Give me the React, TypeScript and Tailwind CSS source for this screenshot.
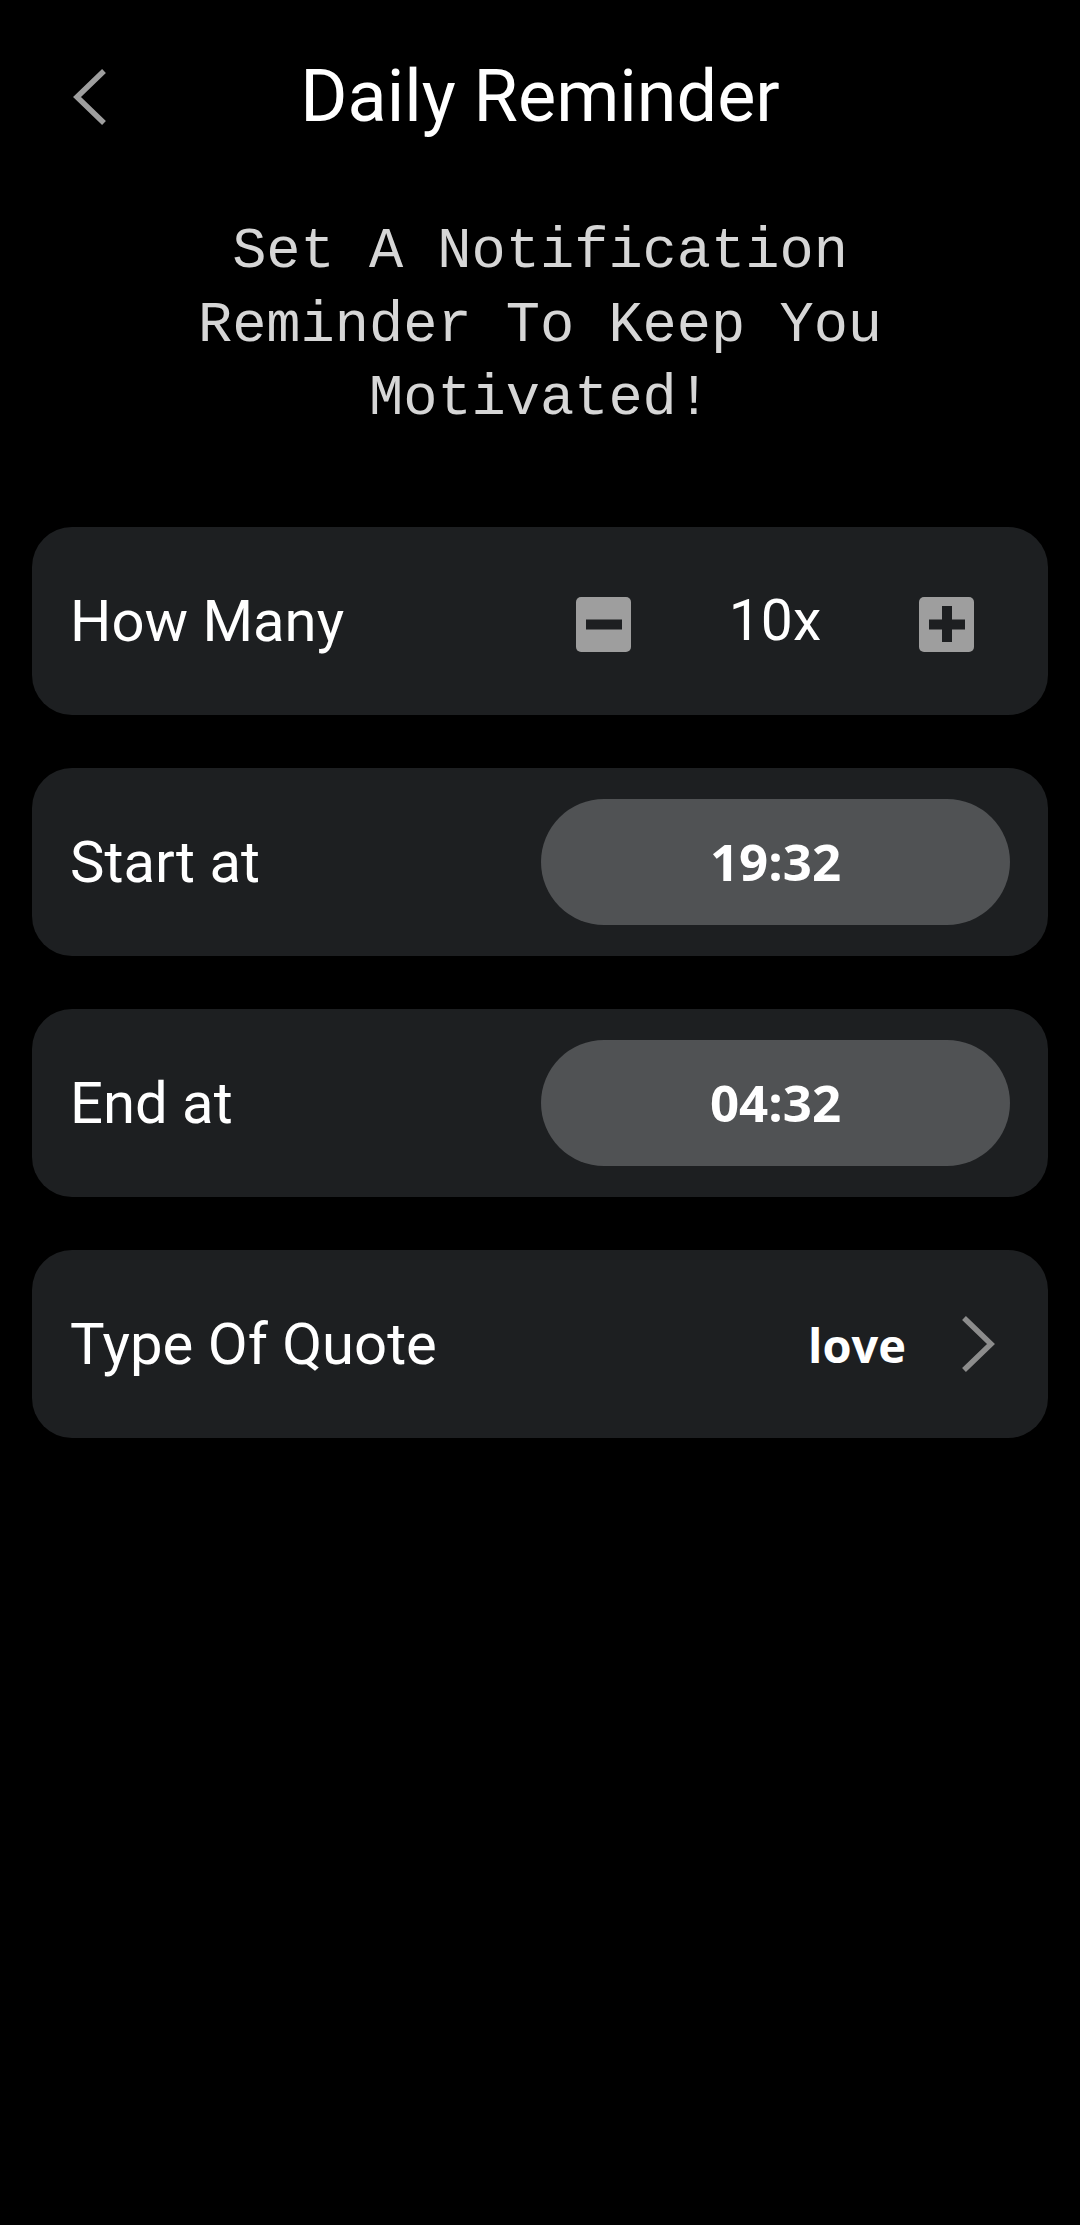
import { useState } from 'react';

function SquareButton({ kind, onClick }: { kind: 'minus' | 'plus'; onClick: () => void }) {
  return (
    <button onClick={onClick} className="mt-[7px] h-[55px] w-[55px] shrink-0">
      <svg viewBox="0 0 55 55" width="55" height="55">
        <rect x="0" y="0" width="55" height="55" rx="5" fill="#9e9e9e" />
        <rect x="10" y="22.5" width="36" height="10" fill="#1d1f21" />
        {kind === 'plus' && <rect x="23" y="9" width="10" height="36" fill="#1d1f21" />}
      </svg>
    </button>
  );
}

function Card({ children }: { children: React.ReactNode }) {
  return (
    <div className="flex h-[188px] items-center justify-between rounded-[40px] bg-[#1d1f21] pl-[38px]">
      {children}
    </div>
  );
}

function Label({ text }: { text: string }) {
  return <span className="text-[58px] leading-none text-white">{text}</span>;
}

function TimePill({ value }: { value: string }) {
  return (
    <div className="mr-[38px] flex h-[126px] w-[469px] items-center justify-center rounded-full bg-[#505254]">
      <span className="font-['Open_Sans'] text-[51px] font-bold leading-none text-white">{value}</span>
    </div>
  );
}

export default function App() {
  const [count, setCount] = useState(10);

  return (
    <div className="min-h-screen bg-black font-['Roboto',sans-serif]">
      <header className="grid h-[194px] grid-cols-[1fr_auto_1fr] items-center">
        <button className="ml-[72px] h-[60px] w-[40px]">
          <svg viewBox="0 0 40 60" width="40" height="60">
            <polyline points="32,4 5,30 32,56" fill="none" stroke="#9e9e9e" strokeWidth="5.5" />
          </svg>
        </button>
        <h1 className="text-[72px] leading-none text-white">Daily Reminder</h1>
        <div />
      </header>

      <p className="mx-auto mt-[22px] max-w-[730px] text-center font-['Liberation_Mono',monospace] text-[57px] leading-[73.5px] text-[#d6d6d6]">
        Set A Notification Reminder To Keep You Motivated!
      </p>

      <div className="mx-[32px] mt-[90px] flex flex-col gap-[53px]">
        <Card>
          <Label text="How Many" />
          <div className="flex items-center pr-[74px]">
            <SquareButton kind="minus" onClick={() => setCount((c) => Math.max(1, c - 1))} />
            <span className="w-[288px] text-center text-[57px] leading-none text-white">{count}x</span>
            <SquareButton kind="plus" onClick={() => setCount((c) => c + 1)} />
          </div>
        </Card>

        <Card>
          <Label text="Start at" />
          <TimePill value="19:32" />
        </Card>

        <Card>
          <Label text="End at" />
          <TimePill value="04:32" />
        </Card>

        <Card>
          <Label text="Type Of Quote" />
          <div className="flex items-center gap-[54px] pr-[52px]">
            <span className="mt-[4px] font-['Open_Sans'] text-[47px] font-bold leading-none text-white">love</span>
            <svg viewBox="0 0 36 58" width="36" height="58">
              <polyline points="4,3 31,29 4,55" fill="none" stroke="#8c8c8c" strokeWidth="5.5" />
            </svg>
          </div>
        </Card>
      </div>
    </div>
  );
}
